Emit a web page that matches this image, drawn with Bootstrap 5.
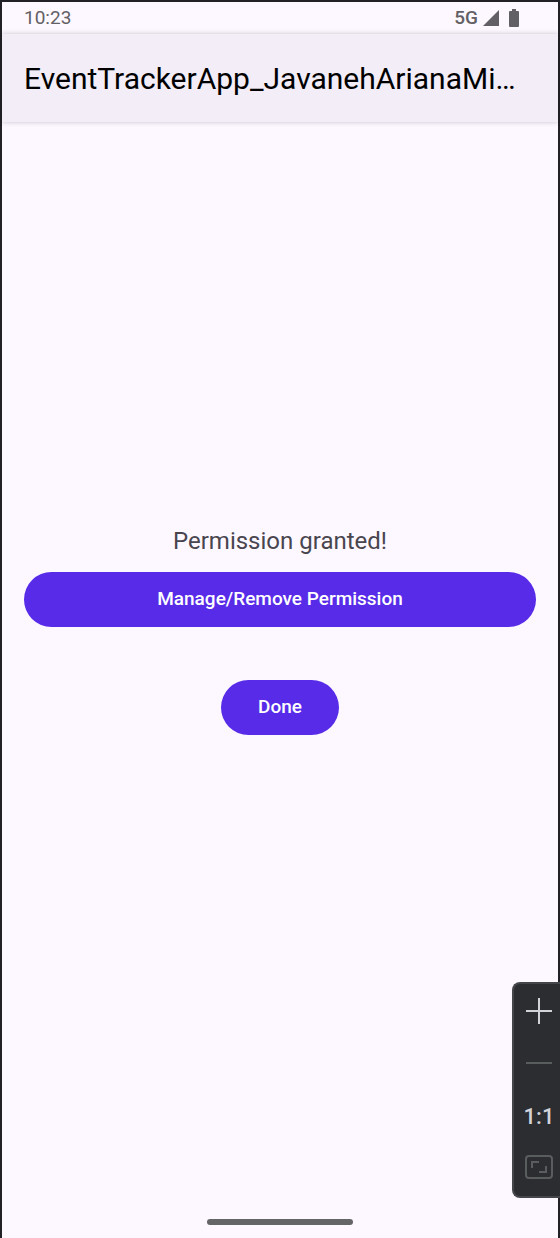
<!DOCTYPE html>
<html lang="en">
<head>
<meta charset="utf-8">
<meta name="viewport" content="width=device-width, initial-scale=1">
<title>EventTrackerApp</title>
<link href="https://cdn.jsdelivr.net/npm/bootstrap@5.3.0/dist/css/bootstrap.min.css" rel="stylesheet">
<style>
  body { font-family: Roboto, "Liberation Sans", sans-serif; background: #fdf8ff; }
  .phone { border: 2px solid #222126; border-bottom: 0; }
  .status-bar { height: 32px; padding: 0 38px 0 22px; color: #626064; font-size: 19px; line-height: 32px; }
  .network { font-weight: 500; }
  .app-bar { height: 88px; padding: 2px 40px 0 22px; background: #f2edf6; box-shadow: 0 0 5px rgba(0, 0, 0, .22); }
  .app-title { font-size: 30px; line-height: 40px; font-weight: 400; color: #000; }
  .above { flex: 5 0 0; }
  .below { flex: 6 0 0; }
  .actions { padding: 0 22px; }
  .message { font-size: 24px; line-height: 32px; color: #49454f; margin-bottom: 15px; }
  .btn-pill { --bs-btn-color: #fff; --bs-btn-bg: #582be8; --bs-btn-border-width: 0; --bs-btn-hover-color: #fff; --bs-btn-hover-bg: #4a20d0;
    --bs-btn-active-color: #fff; --bs-btn-active-bg: #4a20d0; height: 55px; padding: 0 37px; font-size: 19px; font-weight: 500; }
  .btn-done { margin-top: 53px; }
  .gesture { width: 146px; height: 6px; margin-bottom: 13px; background: #656467; }
  .zoom-panel { right: 0; bottom: 40px; width: 48px; height: 216px; padding: 1px 0 2px 5px; background: #2b2d30; border: 2px solid #45464a;
    border-right: 0; border-radius: 8px 0 0 8px; }
  .tool { height: 52px; width: 40px; padding: 0; border: 0; background: none; color: #d2d3d9; }
  .tool-scale { padding: 3px 0 0; font-size: 22px; font-weight: 500; }
  .tool:disabled { color: #5a5d5e; }
</style>
</head>
<body>
<div class="phone d-flex flex-column min-vh-100">
  <div class="status-bar d-flex justify-content-between">
    <span>10:23</span>
    <div class="d-flex align-items-center">
      <span class="network">5G</span>
      <svg class="ms-1" width="18" height="18" viewBox="0 0 18 18" aria-label="Signal"><path d="M1 17 17 1v16z" fill="#626064"/></svg>
      <svg class="ms-2" width="12" height="18" viewBox="0 0 12 18" aria-label="Battery"><path d="M4 0h4v2h2q1 0 1 1v14q0 1-1 1H2q-1 0-1-1V3q0-1 1-1h2z" fill="#626064"/></svg>
    </div>
  </div>
  <header class="app-bar d-flex align-items-center">
    <h1 class="app-title text-truncate m-0">EventTrackerApp_JavanehArianaMi...</h1>
  </header>
  <main class="flex-grow-1 d-flex flex-column align-items-center">
    <div class="above"></div>
    <div class="actions w-100 d-flex flex-column align-items-center">
      <p class="message">Permission granted!</p>
      <button type="button" class="btn btn-pill rounded-pill w-100">Manage/Remove Permission</button>
      <button type="button" class="btn btn-pill btn-done rounded-pill">Done</button>
    </div>
    <div class="below"></div>
  </main>
  <div class="gesture rounded-pill align-self-center"></div>
</div>
<div class="zoom-panel position-fixed d-flex flex-column" role="toolbar" aria-label="Zoom">
  <button type="button" class="tool" aria-label="Zoom in"><svg class="d-block m-auto" width="26" height="26" viewBox="0 0 26 26" stroke="currentColor" stroke-width="2"><path d="M0 13h26M13 0v26"/></svg></button>
  <button type="button" class="tool" aria-label="Zoom out" disabled><svg class="d-block m-auto" width="26" height="26" viewBox="0 0 26 26" stroke="currentColor" stroke-width="2"><path d="M0 13h26"/></svg></button>
  <button type="button" class="tool tool-scale">1:1</button>
  <button type="button" class="tool" aria-label="Fit to screen" disabled><svg class="d-block m-auto" width="28" height="24" viewBox="0 0 28 24" fill="none" stroke="currentColor" stroke-width="2"><rect x="1" y="1" width="26" height="22" rx="3"/><path d="M7 13V7h7M14 17h7v-6"/></svg></button>
</div>
<script src="https://cdn.jsdelivr.net/npm/bootstrap@5.3.0/dist/js/bootstrap.bundle.min.js"></script>
</body>
</html>
